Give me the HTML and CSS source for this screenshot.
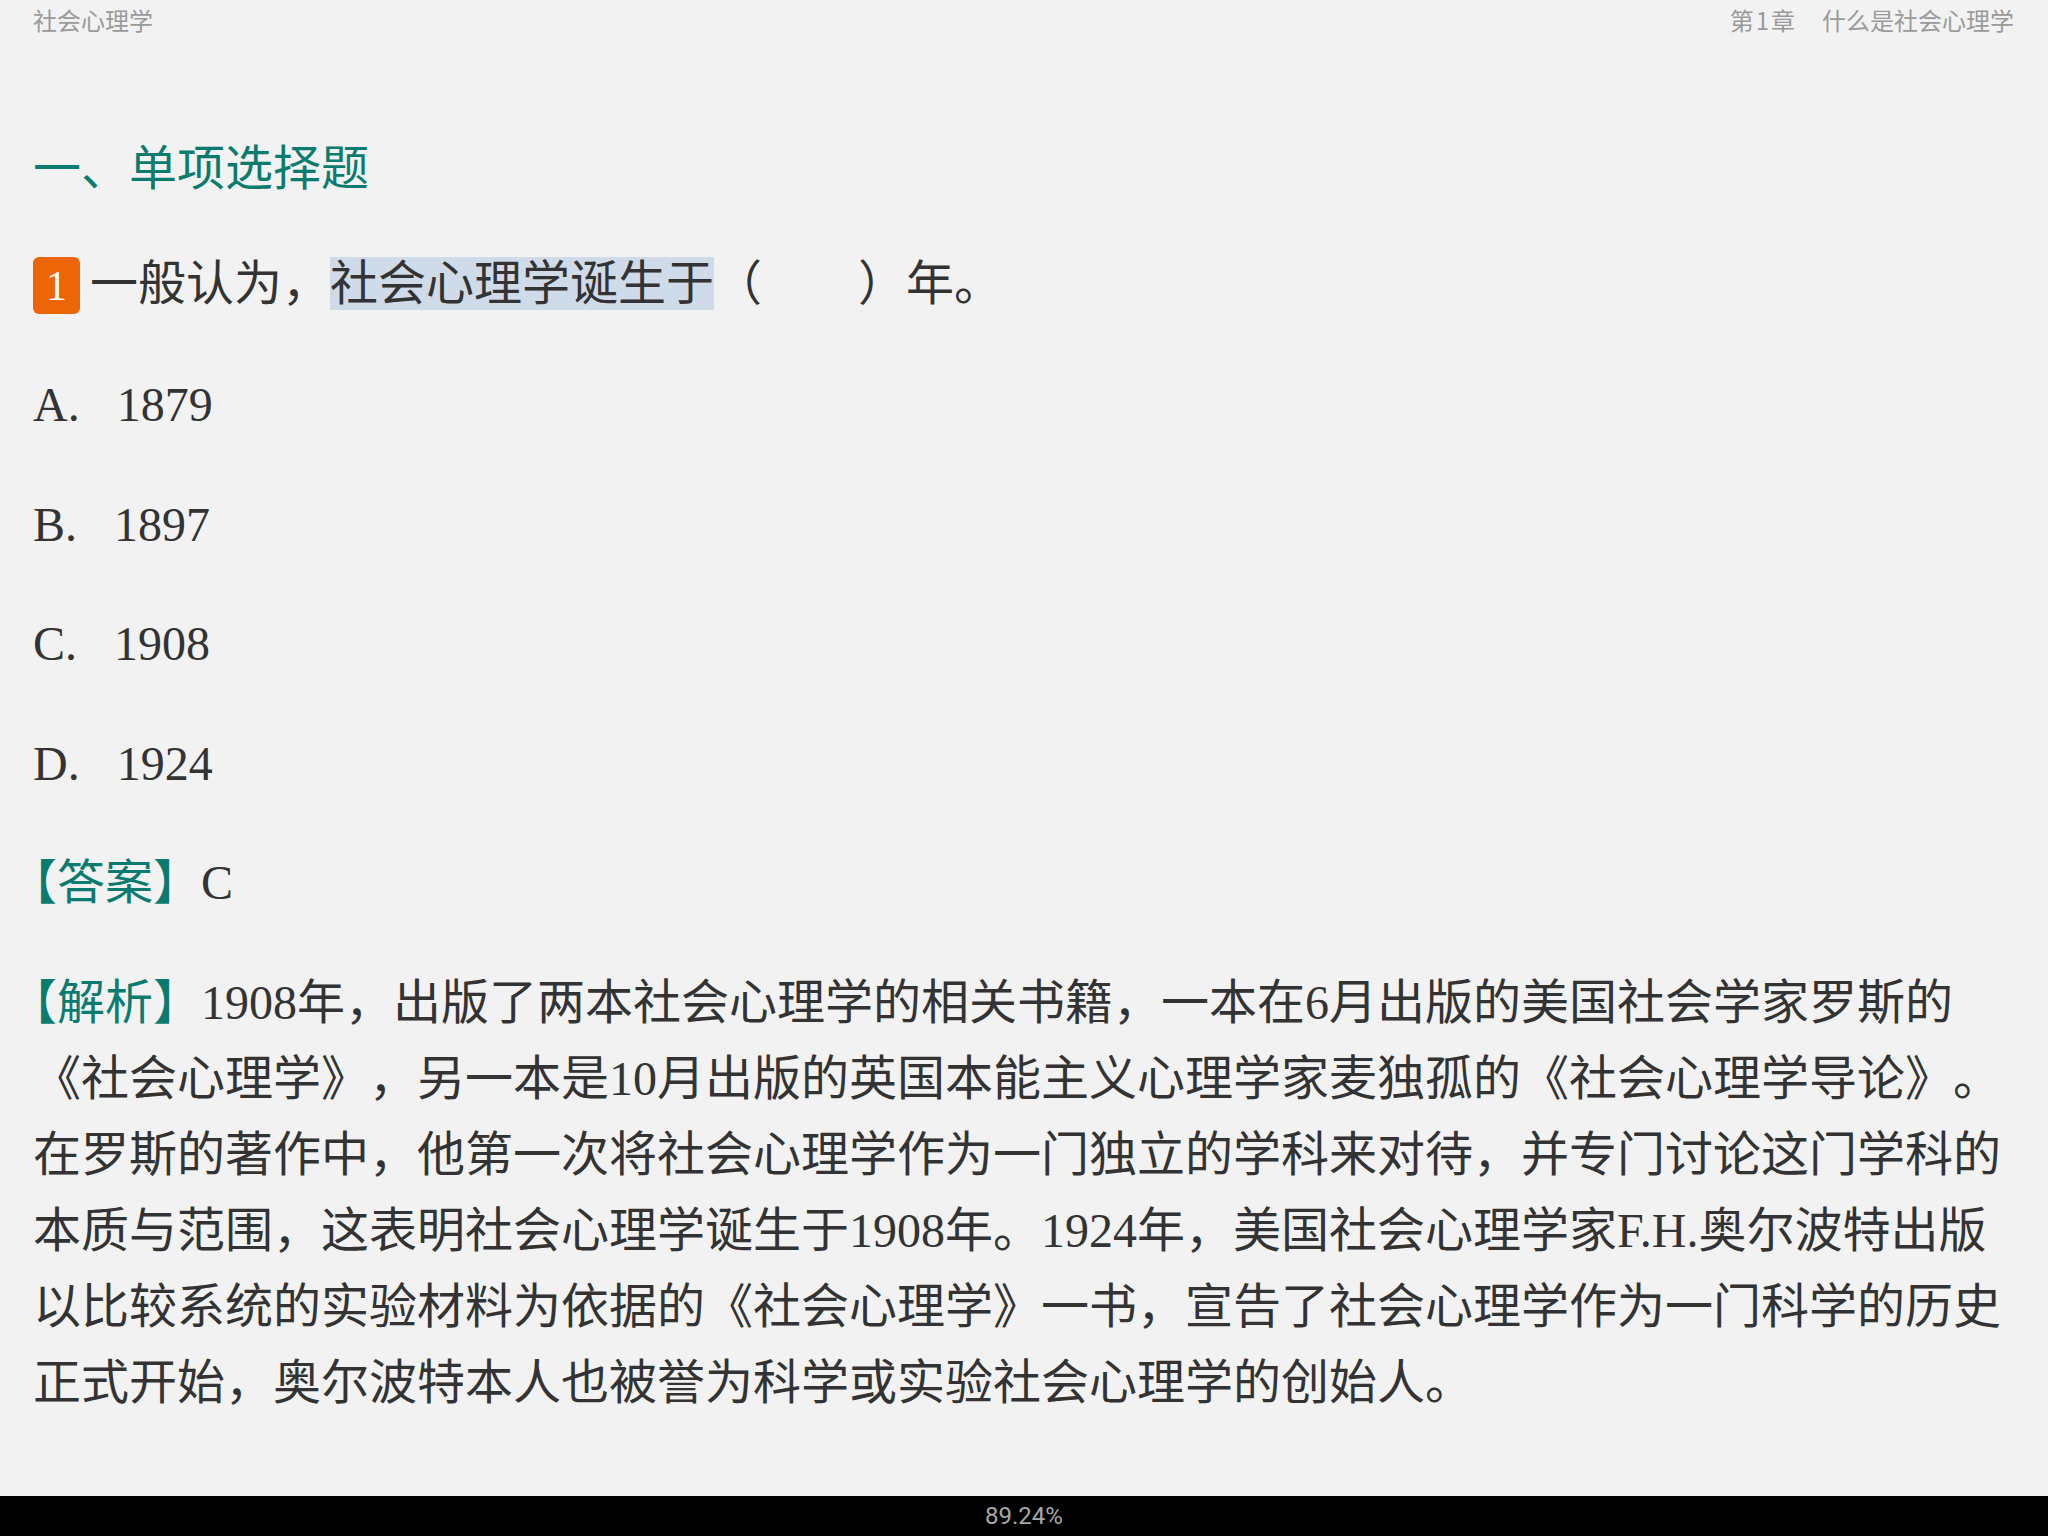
FILE: index.html
```html
<!DOCTYPE html>
<html lang="zh-CN">
<head>
    <meta charset="UTF-8">
    <meta name="viewport" content="width=device-width, initial-scale=1.0">
    <title>社会心理学 - 第1章</title>
    <link rel="stylesheet" href="styles.css">
</head>
<body>
    <div class="topbar">
        <span class="book">社会心理学</span>
        <span class="chapter"><span class="chno">第<span class="num">1</span>章</span>什么是社会心理学</span>
    </div>

    <div class="page">
        <h2 class="section">一、单项选择题</h2>

        <p class="question"><span class="qno">1</span>一般认为，<span class="mark">社会心理学诞生于</span>（　　）年。</p>

        <p class="option"><span class="opt">A.</span>1879</p>
        <p class="option"><span class="opt">B.</span>1897</p>
        <p class="option"><span class="opt">C.</span>1908</p>
        <p class="option"><span class="opt">D.</span>1924</p>

        <p class="text"><span class="tag">【答案】</span>C</p>

        <p class="text"><span class="tag">【解析】</span>1908年，出版了两本社会心理学的相关书籍，一本在6月出版的美国社会学家罗斯的《社会心理学》，另一本是10月出版的英国本能主义心理学家麦独孤的《社会心理学导论》。在罗斯的著作中，他第一次将社会心理学作为一门独立的学科来对待，并专门讨论这门学科的本质与范围，这表明社会心理学诞生于1908年。1924年，美国社会心理学家F.H.奥尔波特出版以比较系统的实验材料为依据的《社会心理学》一书，宣告了社会心理学作为一门科学的历史正式开始，奥尔波特本人也被誉为科学或实验社会心理学的创始人。</p>
    </div>

    <div class="footer">89.24%</div>
</body>
</html>
```

FILE: styles.css
```css
html, body {
    margin: 0;
    padding: 0;
}
body {
    height: 100vh;
    display: flex;
    flex-direction: column;
    background-color: #f2f2f2;
    color: #333;
    font-family: "Liberation Serif", "Noto Sans CJK SC", serif;
    text-spacing-trim: space-all;
    overflow: hidden;
}
.topbar {
    height: 38px;
    padding: 0 34px 0 33px;
    display: flex;
    justify-content: space-between;
    align-items: center;
    font-family: "Noto Sans CJK SC", sans-serif;
    font-size: 24px;
    color: #9a9a9a;
}
.chno {
    margin-right: 27px;
}
.chno .num {
    padding: 0 2px;
}
.page {
    flex: 1;
    padding: 88px 0 0 33px;
    width: 1968px;
}
.section,
.question,
.option,
.text {
    margin: 0 0 43.5px 0;
    font-size: 48px;
    font-weight: normal;
    line-height: 76px;
}
.section {
    font-family: "Noto Sans CJK SC", sans-serif;
    color: #0b7b70;
}
.opt {
    margin-right: 37px;
}
.qno {
    font-size: 42px;
    color: #fff;
    background-color: #ec6608;
    border-radius: 6px;
    padding: 6px 13px 5px 13px;
    margin-right: 10px;
}
.mark {
    background-color: #cfdbe8;
}
.tag {
    color: #0b7b70;
    margin-left: -24px;
}
.footer {
    height: 40px;
    background-color: #000;
    color: #a8a8a8;
    font-family: Roboto, sans-serif;
    font-size: 24px;
    display: flex;
    justify-content: center;
    align-items: center;
}
```
